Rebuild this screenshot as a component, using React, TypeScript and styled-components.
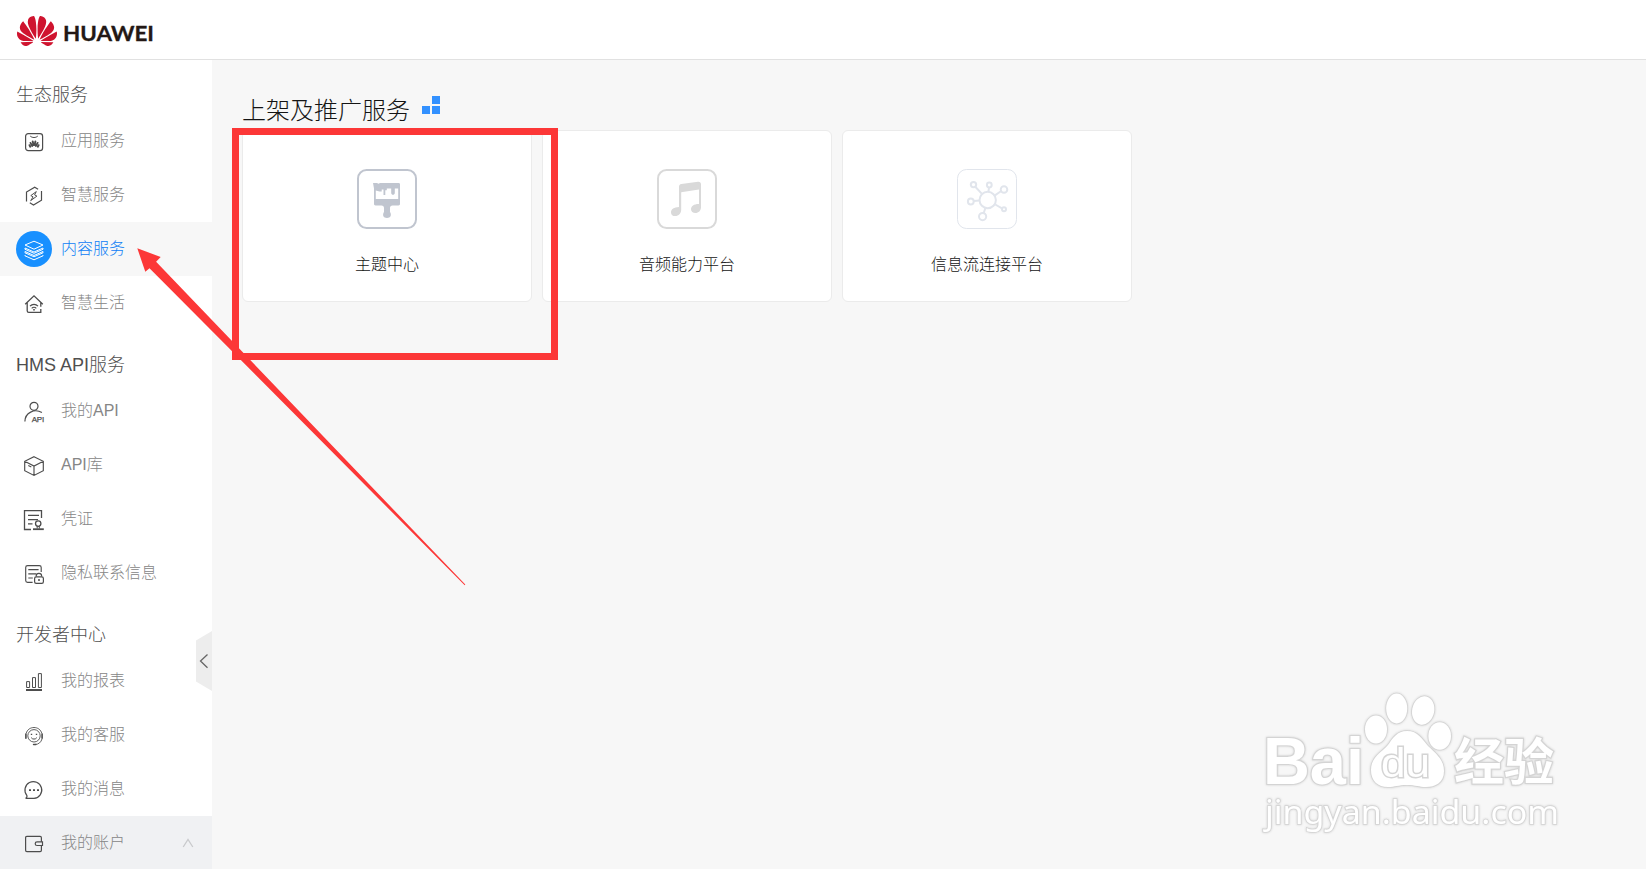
import React from 'react';
import styled, { createGlobalStyle } from 'styled-components';
import { SiHuawei } from 'react-icons/si';

const GlobalStyle = createGlobalStyle`
  * { box-sizing: border-box; }
  body {
    margin: 0;
    overflow: hidden;
    background: #f7f7f7;
    font-family: "Liberation Sans", "Noto Sans CJK SC", sans-serif;
    font-weight: 300;
  }
`;

const Page = styled.div`
  position: relative;
  display: flex;
  flex-direction: column;
  width: 1646px;
  height: 869px;
  overflow: hidden;
`;

const Header = styled.header`
  flex: none;
  display: flex;
  align-items: center;
  gap: 6px;
  height: 60px;
  padding: 2px 17px 0;
  background: #fff;
  border-bottom: 1px solid #e1e1e1;
`;

const Wordmark = styled.svg`
  display: block;
  width: 94px;
  height: 30px;
  margin-top: 5px;
  font: 700 21px Lato, sans-serif;
  fill: #231815;
  stroke: #231815;
  stroke-width: 0.3;
`;

const Body = styled.div`
  flex: 1;
  display: flex;
  min-height: 0;
`;

const Sidebar = styled.nav`
  position: relative;
  flex: none;
  width: 212px;
  height: 810px;
  background: #fff;
`;

const GroupTitle = styled.h2`
  height: 54px;
  margin: 0;
  padding: 8px 16px 0;
  font-size: 18px;
  font-weight: 300;
  line-height: 54px;
  color: #4f4f4f;
  white-space: nowrap;
`;

const MenuRow = styled.div<{ $tone?: 'active' | 'muted' }>`
  display: flex;
  align-items: center;
  gap: 9px;
  height: 54px;
  padding: 0 18px 0 16px;
  background: ${p => (p.$tone === 'active' ? '#f7f7f7' : p.$tone === 'muted' ? '#f0f1f3' : '#fff')};
  color: ${p => (p.$tone === 'active' ? '#0f80f5' : '#868686')};
`;

const IconSlot = styled.span<{ $active?: boolean }>`
  flex: none;
  display: flex;
  align-items: center;
  justify-content: center;
  width: 36px;
  height: 36px;
  margin-top: ${p => (p.$active ? '0' : '2px')};
  border-radius: 50%;
  background: ${p => (p.$active ? '#1890ff' : 'transparent')};
  color: ${p => (p.$active ? '#fff' : '#4d4d4d')};
`;

const Glyph = styled.svg`
  display: block;
  width: 24px;
  height: 24px;
  fill: none;
  stroke: currentColor;
  stroke-width: 1;
`;

const MenuLabel = styled.span`
  flex: 1;
  font-size: 16px;
  line-height: 24px;
  white-space: nowrap;
`;

const Caret = styled.svg`
  width: 12px;
  height: 10px;
  fill: none;
  stroke: #c9cacc;
  stroke-width: 1.3;
`;

const CollapseHandle = styled.svg`
  position: absolute;
  right: 0;
  top: 571px;
  width: 16px;
  height: 60px;
`;

const Main = styled.main`
  flex: 1;
  padding: 26px 30px 0;
`;

const TitleBar = styled.div`
  display: flex;
  align-items: center;
  gap: 12px;
  height: 44px;
`;

const Title = styled.h1`
  margin: 5px 0 0;
  font-size: 24px;
  font-weight: 300;
  line-height: 44px;
  color: #141414;
`;

const TitleMark = styled.svg`
  width: 18px;
  height: 18px;
  margin-bottom: 6px;
  fill: #3391ff;
`;

const Cards = styled.div`
  display: flex;
  gap: 10px;
`;

const Card = styled.section`
  display: flex;
  flex-direction: column;
  align-items: center;
  width: 290px;
  height: 172px;
  padding-top: 38px;
  background: #fff;
  border: 1px solid #ebebeb;
  border-radius: 6px;
`;

const CardIcon = styled.svg<{ $color: string }>`
  display: block;
  width: 60px;
  height: 60px;
  color: ${p => p.$color};
  fill: none;
  stroke: currentColor;
`;

const CardLabel = styled.span`
  margin-top: 24px;
  font-size: 16px;
  line-height: 24px;
  color: #141414;
`;

const Highlight = styled.div`
  position: absolute;
  left: 232px;
  top: 128px;
  width: 326px;
  height: 232px;
  border: 7px solid #fc3737;
`;

const Arrow = styled.svg`
  position: absolute;
  left: 130px;
  top: 240px;
  width: 340px;
  height: 350px;
  fill: #fc3737;
`;

const Watermark = styled.svg`
  position: absolute;
  left: 1250px;
  top: 680px;
  width: 320px;
  height: 160px;
  fill: #fff;
  stroke: #d4d4d4;
  stroke-width: 1.6;
  paint-order: stroke;
  filter: drop-shadow(0 0 1px #cecece);
`;

const icons: Record<string, React.ReactNode> = {
  app: (
    <>
      <rect x="3.6" y="3.6" width="17" height="17" rx="2.6" strokeWidth="1.2" />
      <path d="M8.2 6c1.8 2 5.8 2 7.6 0" />
      <path
        d="M8.300 16.700 7.500 15.200M10.200 15.900 8.500 12.900M11.500 15 10.700 11.400M12.600 15 13.400 11.400M13.900 15.900l1.700-3M15.800 16.700l.8-1.500"
        strokeWidth="1.900"
        strokeLinecap="round"
      />
    </>
  ),
  smart: (
    <>
      <path d="M4.500 17.500V8l8.200-4.800 3.400 2M19.500 7v9.200l-8 4.800-3.700-2.200" strokeWidth="1.200" />
      <path d="m14.300 7.600-5.500 4 2.300 1.300-2.400 3.700 6.200-4.500-2.300-1.200z" />
    </>
  ),
  content: (
    <>
      <path d="m12 4.200 9 3.800-9 4.200L3 8z" />
      <path d="M3 11v1.300l9 4 9-4V11l-9 4zM3 14.500v1.300l9 4 9-4v-1.300l-9 4z" />
      <path d="M3 18v.8l9 4 9-4V18" />
    </>
  ),
  home: (
    <>
      <path d="m3.200 12.300 8.800-8.500 8.800 8.500M5.200 10.800v8c0 1 .6 1.600 1.600 1.600h12V17M18.800 10.800v4" strokeWidth="1.300" />
      <path d="M8 14.200c2.200-2.500 5.800-2.500 8 0M9.700 16.300c1.300-1.400 3.300-1.400 4.600 0" strokeWidth="1.200" />
      <circle cx="12" cy="17.800" r=".5" fill="currentColor" />
    </>
  ),
  userApi: (
    <>
      <circle cx="12" cy="6.300" r="4" strokeWidth="1.200" />
      <path d="M2.900 21.500c0-8.600 9.700-13.500 17-8.900" strokeWidth="1.200" />
      <text x="9.700" y="22" fontSize="8" fontWeight="400" fill="currentColor" strokeWidth=".25" textLength="12.500">
        API
      </text>
    </>
  ),
  box: (
    <path
      d="m12 2.700 9.300 4.600v9.400L12 21.400l-9.300-4.700V7.300zM2.700 7.300 12 12l9.300-4.700M12 12v9.400M6.300 11.400l3 1.500"
      strokeWidth="1.150"
    />
  ),
  cert: (
    <>
      <path d="M19.500 10V2.600h-17v18.900H9M6 7.300h11M6 11.600h10M6 15.800h4.500" strokeWidth="1.300" />
      <circle cx="16.200" cy="15.600" r="2.700" strokeWidth="1.300" />
      <path d="M15.200 18.200v2.300M17.300 18.200v2.300" />
      <path d="M11 21.200h10.800" strokeWidth="1.800" />
    </>
  ),
  privacy: (
    <>
      <path
        d="M19.200 10V5.500c0-1.200-.7-1.900-1.900-1.900H5.600c-1.200 0-1.900.7-1.900 1.900v13c0 1.200.7 1.900 1.900 1.900h5M6.300 7.600h10.300M6.300 11.800h8M6.300 16h4.500"
        strokeWidth="1.150"
      />
      <path d="M14.200 14.500v-.7c0-3.200 5.400-3.200 5.400 0v.7" strokeWidth="1.200" />
      <rect x="12.600" y="14.800" width="8.800" height="6.500" rx="1.600" strokeWidth="1.200" />
      <circle cx="17" cy="18" r=".6" fill="currentColor" />
    </>
  ),
  report: (
    <>
      <path d="M4.600 11.600h3v5.900h-3zM10.500 7.600h3v9.900h-3zM16.400 3.600h3v13.900h-3z" />
      <path d="M4 20h16" strokeWidth="2" />
    </>
  ),
  service: (
    <>
      <circle cx="12" cy="11.800" r="6.200" strokeWidth=".9" />
      <path d="M4.200 9.500C6 1.500 18 1.500 19.800 9.500M20 15c-1 3.300-3.400 5.400-7 5.500" strokeWidth=".9" />
      <path d="M3.900 10v4.200M20.100 10v4.200M11.600 20.500h2.200" strokeWidth="1.600" strokeLinecap="round" />
      <path d="M9.200 13.600c1.100 2 4.500 2 5.600 0" />
      <path d="M9.500 9.700v1.300M14.500 9.700v1.300" strokeWidth="1.400" />
    </>
  ),
  message: (
    <>
      <path d="M3.600 20.400c1.300-.6 1.700-1.500 1.200-3.100a8.400 8.400 0 1 1 7.200 3.100z" strokeWidth="1.200" />
      <path d="M7 12.200h2M11 12.200h2M15 12.200h2" strokeWidth="1.700" />
    </>
  ),
  wallet: (
    <>
      <path
        d="M19.400 9.800V5.700c0-.8-.5-1.300-1.300-1.300H4.900c-.8 0-1.300.5-1.300 1.300v12.600c0 .8.5 1.300 1.300 1.300h13.200c.8 0 1.300-.5 1.300-1.300v-4.700"
        strokeWidth="1.200"
      />
      <path d="M20.500 9.900h-5.400c-1.200 0-1.900.7-1.900 1.800s.7 1.800 1.900 1.800h5.400z" strokeWidth="1.200" />
    </>
  ),
};

type Tone = 'active' | 'muted';
type Item = { icon: string; label: string; tone?: Tone };

const groups: { title: string; items: Item[] }[] = [
  {
    title: '生态服务',
    items: [
      { icon: 'app', label: '应用服务' },
      { icon: 'smart', label: '智慧服务' },
      { icon: 'content', label: '内容服务', tone: 'active' },
      { icon: 'home', label: '智慧生活' },
    ],
  },
  {
    title: 'HMS API服务',
    items: [
      { icon: 'userApi', label: '我的API' },
      { icon: 'box', label: 'API库' },
      { icon: 'cert', label: '凭证' },
      { icon: 'privacy', label: '隐私联系信息' },
    ],
  },
  {
    title: '开发者中心',
    items: [
      { icon: 'report', label: '我的报表' },
      { icon: 'service', label: '我的客服' },
      { icon: 'message', label: '我的消息' },
      { icon: 'wallet', label: '我的账户', tone: 'muted' },
    ],
  },
];

const cards = [
  {
    label: '主题中心',
    color: '#c0c5cf',
    art: (
      <>
        <rect x="1" y="1" width="58" height="58" rx="8.500" strokeWidth="2" />
        <path
          d="M16 14h4l1.500.8L23 14h18.500c1 0 1.500.5 1.500 1.500V35c0 .7-.6 1.500-1.500 1.500h-6c-1.600 0-2.500 1-2.500 2.500v4c2 3 .5 6-3 6s-5-3-3-6v-4c0-1.500-.9-2.500-2.500-2.500h-6c-.9 0-1.500-.8-1.500-1.500V19.500zM18.800 21.500v8.500h22.400V19.500h-3.400v4.200c0 2.700-3.600 2.700-3.600 0v-4.200h-4.400v1.800h-1.500V26h-1.800v-5.500h-1.800v2h-2.200z"
          fill="currentColor"
          fillRule="evenodd"
          stroke="none"
        />
      </>
    ),
  },
  {
    label: '音频能力平台',
    color: '#d9d9d9',
    art: (
      <>
        <rect x="1" y="1" width="58" height="58" rx="8.500" strokeWidth="2" />
        <path
          d="M22 18c0-1.500.8-2.600 2.400-2.900l16.600-2.300c1.900-.2 3 .8 3 2.500V38.200c0 3.400-2.400 5.800-5.600 5.800-2.500 0-4.400-1.500-4.400-3.700 0-3 3-5.300 8-5.200V20.600L24.200 23.200V40.800c0 3.700-2.600 6.300-5.900 6.300-2.600 0-4.300-1.500-4.300-3.700 0-3.100 3-5.200 8-5.300z"
          fill="currentColor"
          stroke="none"
        />
      </>
    ),
  },
  {
    label: '信息流连接平台',
    color: '#e1e5ec',
    art: (
      <>
        <rect x=".5" y=".5" width="59" height="59" rx="9" />
        <g strokeWidth="2">
          <circle cx="30.700" cy="31" r="8.200" />
          <circle cx="16.500" cy="15.600" r="2.700" />
          <circle cx="32.300" cy="16" r="2.400" />
          <circle cx="47" cy="20.500" r="3.300" />
          <circle cx="13.800" cy="32.500" r="2.900" />
          <circle cx="25.600" cy="47.600" r="3.600" />
          <circle cx="47" cy="40.300" r="2" />
          <path d="m18.300 17.800 6.400 6.800M32 18.500l-.5 4.200M43.900 22.200l-6 4.200M16.800 32l5.800-.6M26.700 44l1.700-5M45 39.300l-6.700-3.800" />
        </g>
      </>
    ),
  },
];

export default function App() {
  return (
    <>
      <GlobalStyle />
      <Page>
        <Header>
          <SiHuawei size={40} color="#cf142f" />
          <Wordmark viewBox="0 0 94 30">
            <text x="0" y="22.500" textLength="91" lengthAdjust="spacingAndGlyphs">
              HUAWEI
            </text>
          </Wordmark>
        </Header>
        <Body>
          <Sidebar>
            {groups.map(group => (
              <React.Fragment key={group.title}>
                <GroupTitle>{group.title}</GroupTitle>
                {group.items.map(item => (
                  <MenuRow key={item.label} $tone={item.tone}>
                    <IconSlot $active={item.tone === 'active'}>
                      <Glyph viewBox="0 0 24 24">{icons[item.icon]}</Glyph>
                    </IconSlot>
                    <MenuLabel>{item.label}</MenuLabel>
                    {item.tone === 'muted' && (
                      <Caret viewBox="0 0 12 10">
                        <path d="m1.200 9 4.800-7.500L10.800 9" />
                      </Caret>
                    )}
                  </MenuRow>
                ))}
              </React.Fragment>
            ))}
            <CollapseHandle viewBox="0 0 16 60">
              <path d="M16 0v60L0 50.500V9.500z" fill="#ededed" />
              <path d="m11.500 23.500-7 6.500 7 6.800" fill="none" stroke="#666" strokeWidth="1.300" />
            </CollapseHandle>
          </Sidebar>
          <Main>
            <TitleBar>
              <Title>上架及推广服务</Title>
              <TitleMark viewBox="0 0 18 18">
                <path d="M10 0h8v8h-8zM0 10h8v8H0zM10 10h8v8h-8z" />
              </TitleMark>
            </TitleBar>
            <Cards>
              {cards.map(card => (
                <Card key={card.label}>
                  <CardIcon viewBox="0 0 60 60" $color={card.color}>
                    {card.art}
                  </CardIcon>
                  <CardLabel>{card.label}</CardLabel>
                </Card>
              ))}
            </Cards>
          </Main>
        </Body>
        <Highlight />
        <Arrow viewBox="130 240 340 350">
          <path d="M137.300 248.300 160.700 257l-4.600 4.700L465.300 584.600l-.6.600L149.500 268.300l-4.200 3.500z" />
        </Arrow>
        <Watermark viewBox="1250 680 320 160">
          <text x="1263" y="784" fontFamily="Liberation Sans" fontSize="67" fontWeight="700" strokeWidth="2.200" textLength="101" lengthAdjust="spacingAndGlyphs">
            Bai
          </text>
          <ellipse cx="1376" cy="729.500" rx="11" ry="14" />
          <ellipse cx="1396.700" cy="708.500" rx="10.500" ry="15" />
          <ellipse cx="1423.300" cy="710.500" rx="11" ry="14.300" transform="rotate(12 1423 710)" />
          <ellipse cx="1439.700" cy="736" rx="11.300" ry="13.800" />
          <path d="M1407 731c11 0 15 8 21 15 7 7 16 13 16 25 0 12-9 16-18 16-7 0-10-2-19-2s-12 2-19 2c-10 0-17-6-17-17 0-13 10-17 17-25 5-7 9-14 19-14z" />
          <text x="1381" y="777" fontFamily="Liberation Sans" fontSize="41" fontWeight="400" stroke="#d4d4d4" strokeWidth="2.800" textLength="49" lengthAdjust="spacingAndGlyphs">
            du
          </text>
          <text x="1454" y="780" fontFamily="Noto Sans CJK SC" fontSize="50" fontWeight="700" strokeWidth="2.200" textLength="100" lengthAdjust="spacingAndGlyphs">
            经验
          </text>
          <text x="1265" y="824" fontFamily="Noto Sans" fontSize="33" fontWeight="400" textLength="294" lengthAdjust="spacingAndGlyphs">
            jingyan.baidu.com
          </text>
        </Watermark>
      </Page>
    </>
  );
}
